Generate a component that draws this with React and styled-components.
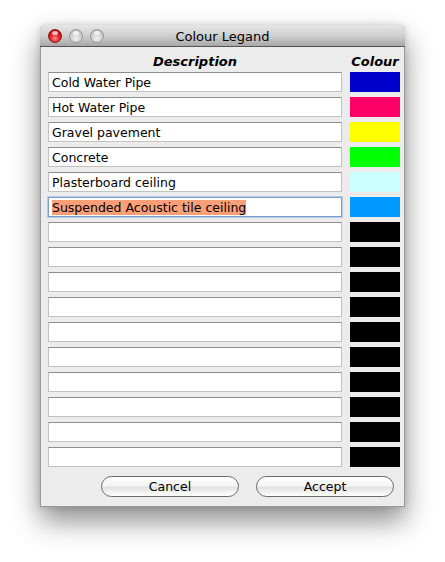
import React from "react";
import styled, { createGlobalStyle } from "styled-components";

const Global = createGlobalStyle`
  html, body { margin: 0; padding: 0; background: #ffffff; }
  body { font-family: "DejaVu Sans", "Liberation Sans", sans-serif; }
`;

const Page = styled.div`
  width: 445px;
  height: 562px;
  padding: 25px 0 0 40px;
  box-sizing: border-box;
`;

const Window = styled.div`
  width: 365px;
  height: 482px;
  box-sizing: border-box;
  background: #ececec;
  border: 1px solid #9a9a9a;
  border-top: none;
  border-radius: 5px 5px 0 0;
  box-shadow: 0 14px 28px rgba(0, 0, 0, 0.45), 0 0 6px rgba(0, 0, 0, 0.15);
  display: flex;
  flex-direction: column;
`;

const TitleBar = styled.div`
  height: 22px;
  box-sizing: border-box;
  border-radius: 5px 5px 0 0;
  background: linear-gradient(#e6e6e6, #cfcfcf 50%, #a8a8a8);
  border-bottom: 1px solid #555;
  display: flex;
  align-items: center;
  position: relative;
  padding-left: 8px;
  margin: 0 -1px;
`;

const Lights = styled.div`
  display: flex;
  gap: 7px;
  padding-top: 1px;
`;

const Light = styled.span`
  width: 14px;
  height: 14px;
  border-radius: 50%;
  box-sizing: border-box;
  border: 1px solid ${(p) => (p.$red ? "#8a1a1a" : "#9a9a9a")};
  background: ${(p) =>
    p.$red
      ? "radial-gradient(circle at 50% 70%, #ff8a8a 0%, #e02020 45%, #a00000 100%)"
      : "radial-gradient(circle at 50% 70%, #f0f0f0 0%, #d0d0d0 50%, #b0b0b0 100%)"};
  position: relative;
  &::after {
    content: "";
    position: absolute;
    left: 3px;
    top: 1px;
    width: 6px;
    height: 4px;
    border-radius: 50%;
    background: rgba(255, 255, 255, 0.7);
  }
`;

const Title = styled.div`
  position: absolute;
  left: 0;
  right: 0;
  top: 1px;
  bottom: 0;
  display: flex;
  align-items: center;
  justify-content: center;
  font-size: 13px;
  color: #000;
  pointer-events: none;
`;

const Body = styled.div`
  flex: 1;
  padding: 0 4px 0 7px;
  display: flex;
  flex-direction: column;
`;

const Grid = styled.div`
  display: grid;
  grid-template-columns: 294px 50px;
  grid-template-rows: 20px;
  column-gap: 8px;
  row-gap: 5px;
  grid-auto-rows: 20px;
`;

const Header = styled.div`
  box-sizing: border-box;
  padding-top: 10px;
  font-size: 13px;
  font-weight: bold;
  font-style: italic;
  text-align: center;
  line-height: 10px;
  color: #000;
`;

const Field = styled.div`
  box-sizing: border-box;
  height: 20px;
  background: #fff;
  border: 1px solid #c2c2c2;
  border-top-color: #8e8e8e;
  ${(p) =>
    p.$focus &&
    `border: 1px solid #7f9bc8; box-shadow: 0 0 0 1px #b8cbe8;`}
  font-size: 12.5px;
  line-height: 19px;
  padding-left: 3px;
  color: #000;
  white-space: nowrap;
  overflow: hidden;
`;

const Selected = styled.span`
  background: #ff9f78;
`;

const Swatch = styled.div`
  height: 20px;
  background: ${(p) => p.$color};
`;

const Buttons = styled.div`
  display: flex;
  gap: 17px;
  padding-left: 53px;
  margin-top: 9px;
`;

const Button = styled.button`
  width: 138px;
  height: 21px;
  box-sizing: border-box;
  border: 1px solid #6a6a6a;
  border-radius: 11px;
  background: linear-gradient(#ffffff, #f4f4f4 45%, #e2e2e2 55%, #f6f6f6 85%, #ffffff);
  font-family: "DejaVu Sans", sans-serif;
  font-size: 12.5px;
  color: #000;
  padding: 0;
`;

const rows = [
  { text: "Cold Water Pipe", color: "#0000cc" },
  { text: "Hot Water Pipe", color: "#ff0066" },
  { text: "Gravel pavement", color: "#ffff00" },
  { text: "Concrete", color: "#00ff00" },
  { text: "Plasterboard ceiling", color: "#ccffff" },
  { text: "Suspended Acoustic tile ceiling", color: "#0099ff", focus: true },
  ...Array.from({ length: 10 }, () => ({ text: "", color: "#000000" })),
];

export default function App() {
  return (
    <Page>
      <Global />
      <Window>
        <TitleBar>
          <Lights>
            <Light $red />
            <Light />
            <Light />
          </Lights>
          <Title>Colour Legand</Title>
        </TitleBar>
        <Body>
          <Grid>
            <Header>Description</Header>
            <Header>Colour</Header>
            {rows.map((r, i) => (
              <React.Fragment key={i}>
                <Field $focus={r.focus}>
                  {r.focus ? <Selected>{r.text}</Selected> : r.text}
                </Field>
                <Swatch $color={r.color} />
              </React.Fragment>
            ))}
          </Grid>
          <Buttons>
            <Button>Cancel</Button>
            <Button>Accept</Button>
          </Buttons>
        </Body>
      </Window>
    </Page>
  );
}
